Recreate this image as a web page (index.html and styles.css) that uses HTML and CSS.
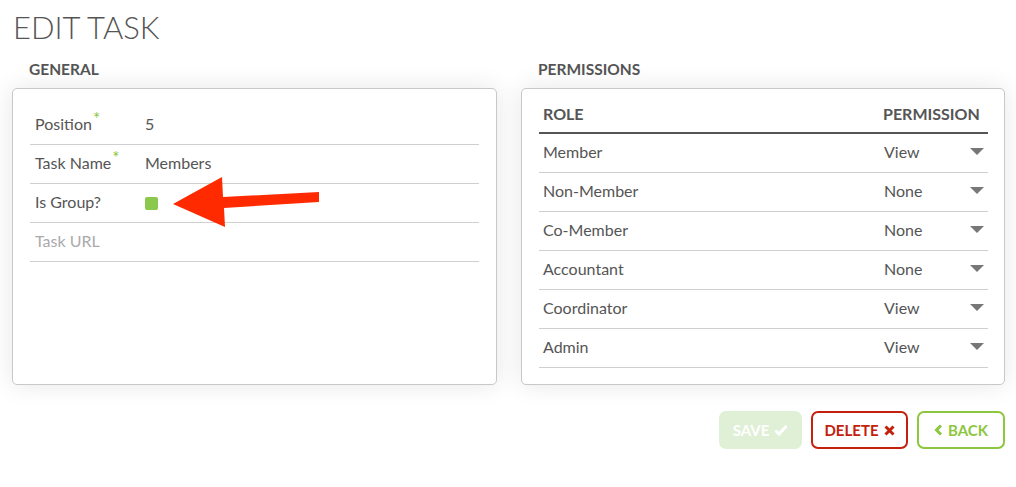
FILE: index.html
```html
<!DOCTYPE html>
<html>
<head>
<meta charset="utf-8">
<link rel="stylesheet" href="styles.css">
</head>
<body>
<div class="page">
  <h1 class="title">EDIT TASK</h1>
  <div class="columns">
    <section class="col">
      <h2 class="sec-title">GENERAL</h2>
      <div class="panel panel-general">
        <div class="frow"><span class="flabel">Position<span class="req">*</span></span><span class="fval">5</span></div>
        <div class="frow"><span class="flabel">Task Name<span class="req">*</span></span><span class="fval">Members</span></div>
        <div class="frow"><span class="flabel">Is Group?</span><span class="fval"><span class="check"></span></span></div>
        <div class="frow"><span class="flabel muted">Task URL</span><span class="fval"></span></div>
        <svg class="arrow" width="170" height="65" viewBox="0 0 170 65"><polygon points="12,33 61,6 62,26 158,21 158,31 63,37 64,56" fill="#ff2a00"/></svg>
      </div>
    </section>
    <section class="col">
      <h2 class="sec-title">PERMISSIONS</h2>
      <div class="panel panel-perm">
        <div class="prow phead"><span class="role">ROLE</span><span class="perm">PERMISSION</span></div>
        <div class="prow"><span class="role">Member</span><span class="perm">View<i class="caret"></i></span></div>
        <div class="prow"><span class="role">Non-Member</span><span class="perm">None<i class="caret"></i></span></div>
        <div class="prow"><span class="role">Co-Member</span><span class="perm">None<i class="caret"></i></span></div>
        <div class="prow"><span class="role">Accountant</span><span class="perm">None<i class="caret"></i></span></div>
        <div class="prow"><span class="role">Coordinator</span><span class="perm">View<i class="caret"></i></span></div>
        <div class="prow"><span class="role">Admin</span><span class="perm">View<i class="caret"></i></span></div>
      </div>
    </section>
  </div>
  <div class="actions">
    <button class="btn btn-save">SAVE <svg width="14" height="12" viewBox="0 0 14 12"><path d="M1.5 6.5 L5 10 L12.5 2" fill="none" stroke="#fff" stroke-width="3"/></svg></button>
    <button class="btn btn-delete">DELETE <svg width="11" height="11" viewBox="0 0 11 11"><path d="M1.5 1.5 L9.5 9.5 M9.5 1.5 L1.5 9.5" stroke="#c4210c" stroke-width="3"/></svg></button>
    <button class="btn btn-back"><svg width="9" height="12" viewBox="0 0 9 12"><path d="M7 1.5 L2.5 6 L7 10.5" fill="none" stroke="#8dc63f" stroke-width="3"/></svg> BACK</button>
  </div>
</div>
</body>
</html>
```

FILE: styles.css
```css
* { box-sizing: border-box; }
html, body { margin: 0; padding: 0; background: #fff; }
body { font-family: Lato, "Open Sans", sans-serif; color: #555; }
.page { padding: 0 11px 0 12px; }
.title {
  margin: 8px 0 0 1px;
  font-size: 31px;
  font-weight: 300;
  line-height: 38px;
  color: #555;
}
.columns { display: flex; gap: 24px; margin-top: 15px; align-items: flex-start; }
.col { display: flex; flex-direction: column; }
.col:first-child { flex: 0 0 485px; }
.col:last-child { flex: 0 0 484px; }
.sec-title {
  margin: 0 0 10px 17px;
  font-size: 15.5px;
  font-weight: 700;
  line-height: 17px;
  color: #555;
}
.panel {
  position: relative;
  border: 1px solid #c8c8c8;
  border-radius: 5px;
  background: #fff;
  box-shadow: 0 0 24px rgba(0,0,0,0.10);
  height: 297px;
}
.panel-general { padding: 17px 17px 16px 17px; }
.frow {
  display: flex;
  align-items: center;
  height: 39px;
  border-bottom: 1px solid #cfcfcf;
  padding-left: 5px;
  padding-bottom: 3px;
  font-size: 16px;
  color: #555;
}
.flabel { width: 110px; }
.req { color: #8dc63f; position: relative; top: -5px; font-size: 17px; margin-left: 1px; }
.muted { color: #aaa; }
.fval { display: flex; align-items: center; }
.check {
  display: inline-block;
  width: 13px;
  height: 13px;
  border-radius: 2px;
  background: #8cc84b;
  margin-top: 3px;
}
.arrow { position: absolute; left: 148px; top: 82px; }
.panel-perm { padding: 10px 16px 16px 17px; }
.prow {
  display: grid;
  grid-template-columns: 1fr 109px;
  align-items: center;
  height: 39px;
  border-bottom: 1px solid #cfcfcf;
  padding-bottom: 3px;
  font-size: 16px;
  color: #555;
}
.prow.phead {
  height: 35px;
  border-bottom: 2px solid #555;
  font-size: 16px;
  font-weight: 700;
  padding-bottom: 5px;
}
.role { padding-left: 4px; }
.perm { display: flex; justify-content: space-between; align-items: center; padding-left: 5px; padding-right: 4px; }
.phead .perm { padding-left: 4px; }
.caret {
  width: 0; height: 0;
  border-left: 7.5px solid transparent;
  border-right: 7.5px solid transparent;
  border-top: 7px solid #777;
}
.actions { display: flex; justify-content: flex-end; gap: 9px; margin-top: 26px; }
.btn {
  height: 38px;
  border-radius: 7px;
  border: 2px solid;
  background: #fff;
  font-family: Lato, sans-serif;
  font-size: 15px;
  font-weight: 700;
  display: inline-flex;
  align-items: center;
  justify-content: center;
  gap: 5px;
  padding: 0;
}
.btn-save { width: 83px; background: #dff0d6; border-color: #dff0d6; color: #fff; }
.btn-delete { width: 97px; border-color: #c4210c; color: #c4210c; }
.btn-back { width: 88px; border-color: #8dc63f; color: #8dc63f; }
```
